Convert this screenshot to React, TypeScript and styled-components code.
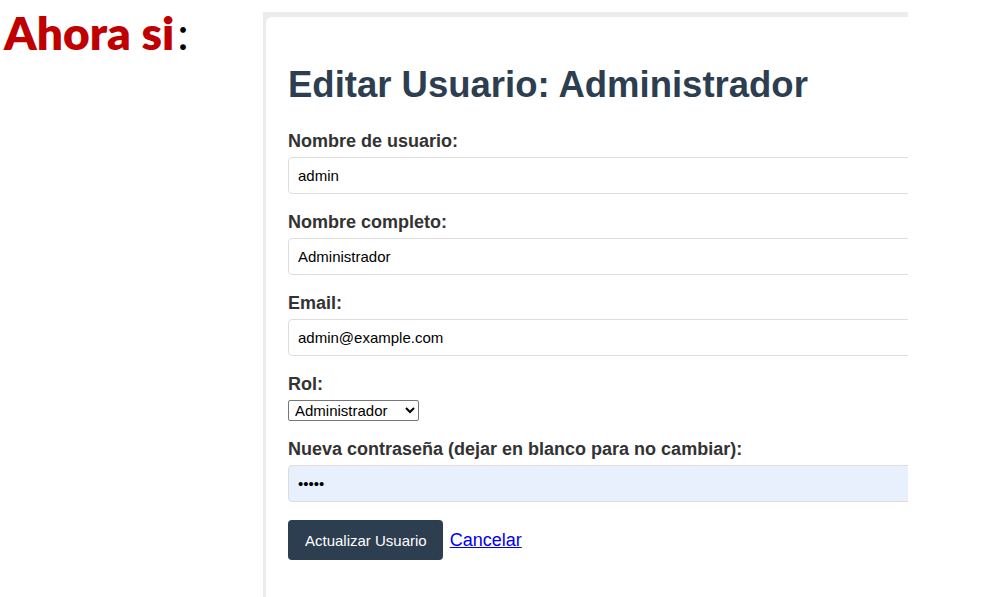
import React from "react";
import styled, { createGlobalStyle } from "styled-components";

const Global = createGlobalStyle`
  html, body { margin: 0; padding: 0; background: #ffffff; }
  body { font-family: "Liberation Sans", Arial, sans-serif; }
`;

const Page = styled.div`
  display: flex;
  height: 597px;
  overflow: hidden;
`;

const Caption = styled.div`
  width: 263px;
  flex: none;
  padding: 7px 0 0 4px;
  box-sizing: border-box;
  font-family: Lato, "Liberation Sans", sans-serif;
  font-size: 46px;
  line-height: 52px;
  font-weight: 800;
  color: #c00000;
`;

const Colon = styled.span`
  color: #000000;
  font-weight: 400;
  margin-left: 3px;
`;

const Frame = styled.div`
  margin-top: 12px;
  width: 645px;
  flex: none;
  background: #ececec;
  padding: 5px 0 0 3px;
  box-sizing: border-box;
  overflow: hidden;
  display: flex;
`;

const Card = styled.div`
  flex: 1;
  background: #ffffff;
  border-top-left-radius: 6px;
  padding: 47px 0 0 22px;
  min-width: 0;
`;

const Title = styled.h1`
  margin: 0 0 26px;
  font-size: 36.5px;
  font-weight: 700;
  color: #2c3e50;
  line-height: 41px;
  white-space: nowrap;
`;

const Field = styled.div`
  margin-bottom: 18px;
`;

const Label = styled.label`
  display: block;
  font-size: 18px;
  font-weight: 700;
  color: #333333;
  line-height: 21px;
  margin-bottom: 5px;
  white-space: nowrap;
`;

const TextInput = styled.input<{ $filled?: boolean }>`
  display: block;
  box-sizing: border-box;
  width: 700px;
  height: 37px;
  padding: 0 9px;
  border: 1px solid #dddddd;
  border-radius: 4px;
  background: ${(p) => (p.$filled ? "#e8f0fe" : "#ffffff")};
  font-family: "Liberation Sans", Arial, sans-serif;
  font-size: 15px;
  color: #000000;
  outline: none;
`;

const Select = styled.select`
  display: block;
  box-sizing: border-box;
  margin-top: 2px;
  font-family: "Liberation Sans", Arial, sans-serif;
  font-size: 15px;
  color: #000000;
  height: 21px;
  width: 131px;
  padding: 0 0 0 2px;
  border: 1px solid #767676;
  border-radius: 2px;
  background: #ffffff;
`;

const Actions = styled.div`
  display: flex;
  align-items: baseline;
  gap: 7px;
  margin-top: 17px;
`;

const Button = styled.button`
  background: #2c3e50;
  color: #ffffff;
  border: none;
  border-radius: 4px;
  height: 40px;
  padding: 0 16px 0 17px;
  font-family: "Liberation Sans", Arial, sans-serif;
  font-size: 15px;
  cursor: pointer;
`;

const Link = styled.a`
  font-size: 18px;
  color: #0000ee;
  text-decoration: underline;
`;

export default function App() {
  return (
    <>
      <Global />
      <Page>
        <Caption>
          Ahora si<Colon>:</Colon>
        </Caption>
        <Frame>
          <Card>
            <Title>Editar Usuario: Administrador</Title>
            <form onSubmit={(e) => e.preventDefault()}>
              <Field>
                <Label htmlFor="username">Nombre de usuario:</Label>
                <TextInput id="username" defaultValue="admin" />
              </Field>
              <Field>
                <Label htmlFor="fullname">Nombre completo:</Label>
                <TextInput id="fullname" defaultValue="Administrador" />
              </Field>
              <Field>
                <Label htmlFor="email">Email:</Label>
                <TextInput id="email" type="email" defaultValue="admin@example.com" />
              </Field>
              <Field>
                <Label htmlFor="role">Rol:</Label>
                <Select id="role" defaultValue="admin">
                  <option value="admin">Administrador</option>
                  <option value="user">Usuario</option>
                </Select>
              </Field>
              <Field>
                <Label htmlFor="password">Nueva contraseña (dejar en blanco para no cambiar):</Label>
                <TextInput id="password" type="password" defaultValue="12345" $filled />
              </Field>
              <Actions>
                <Button type="submit">Actualizar Usuario</Button>
                <Link href="#">Cancelar</Link>
              </Actions>
            </form>
          </Card>
        </Frame>
      </Page>
    </>
  );
}
